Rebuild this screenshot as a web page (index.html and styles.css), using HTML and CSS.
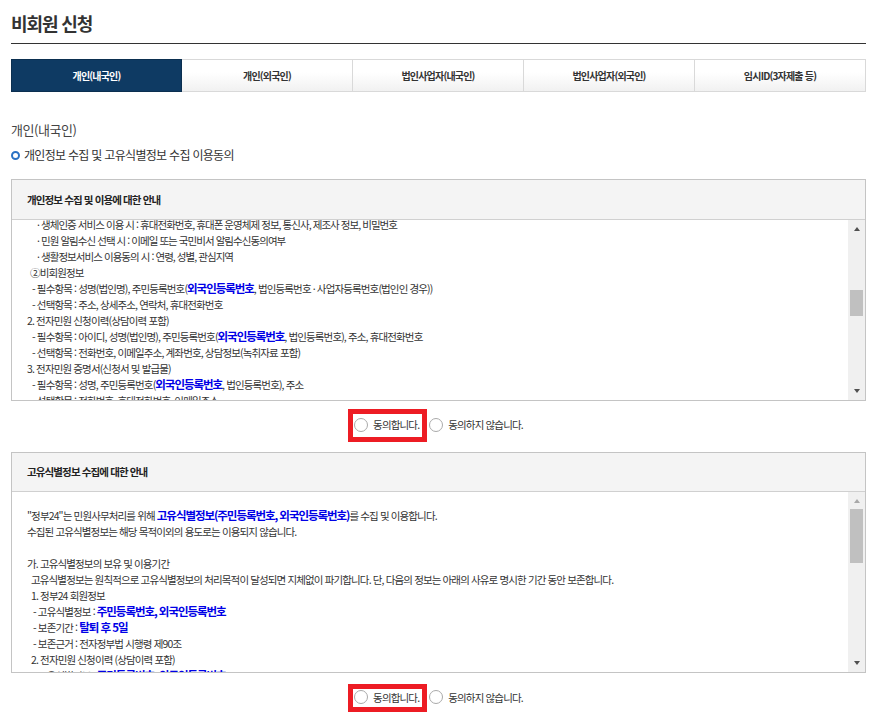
FILE: index.html
```html
<!DOCTYPE html>
<html lang="ko">
<head>
<meta charset="utf-8">
<title>비회원 신청</title>
<link rel="stylesheet" href="styles.css">
</head>
<body>
<main class="page">
  <h1 class="title">비회원 신청</h1>
  <nav class="tabs">
    <a class="tab tab-active">개인(내국인)</a>
    <a class="tab">개인(외국인)</a>
    <a class="tab">법인사업자(내국인)</a>
    <a class="tab">법인사업자(외국인)</a>
    <a class="tab">임시ID(3자제출 등)</a>
  </nav>
  <h2 class="section">개인(내국인)</h2>
  <p class="bullet"><span class="dot"></span>개인정보 수집 및 고유식별정보 수집 이용동의</p>

  <section class="box">
    <h3 class="box-head">개인정보 수집 및 이용에 대한 안내</h3>
    <div class="box-body">
      <div class="scroll-text text-a">
        <p class="l3">· 생체인증 서비스 이용 시 : 휴대전화번호, 휴대폰 운영체제 정보, 통신사, 제조사 정보, 비밀번호</p>
        <p class="l3">· 민원 알림수신 선택 시 : 이메일 또는 국민비서 알림수신동의여부</p>
        <p class="l3">· 생활정보서비스 이용동의 시 : 연령, 성별, 관심지역</p>
        <p class="l0">②비회원정보</p>
        <p class="l2">- 필수항목 : 성명(법인명), 주민등록번호(<b>외국인등록번호</b>, 법인등록번호 · 사업자등록번호(법인인 경우))</p>
        <p class="l2">- 선택항목 : 주소, 상세주소, 연락처, 휴대전화번호</p>
        <p>2. 전자민원 신청이력(상담이력 포함)</p>
        <p class="l2">- 필수항목 : 아이디, 성명(법인명), 주민등록번호(<b>외국인등록번호</b>, 법인등록번호), 주소, 휴대전화번호</p>
        <p class="l2">- 선택항목 : 전화번호, 이메일주소, 계좌번호, 상담정보(녹취자료 포함)</p>
        <p>3. 전자민원 증명서(신청서 및 발급물)</p>
        <p class="l2">- 필수항목 : 성명, 주민등록번호(<b>외국인등록번호</b>, 법인등록번호), 주소</p>
        <p class="l2">- 선택항목 : 전화번호, 휴대전화번호, 이메일주소</p>
      </div>
      <div class="scrollbar">
        <span class="arrow arrow-up"></span>
        <div class="track track-a"><span class="thumb thumb-a"></span></div>
        <span class="arrow arrow-down"></span>
      </div>
    </div>
  </section>
  <div class="agree agree-a">
    <label class="choice choice-mark choice-mark-a"><span class="radio"></span>동의합니다.</label>
    <label class="choice"><span class="radio"></span>동의하지 않습니다.</label>
  </div>

  <section class="box">
    <h3 class="box-head box-head-b">고유식별정보 수집에 대한 안내</h3>
    <div class="box-body">
      <div class="scroll-text text-b">
        <p>"정부24"는 민원사무처리를 위해 <b>고유식별정보(주민등록번호, 외국인등록번호)</b>를 수집 및 이용합니다.</p>
        <p>수집된 고유식별정보는 해당 목적이외의 용도로는 이용되지 않습니다.</p>
        <p>&nbsp;</p>
        <p>가. 고유식별정보의 보유 및 이용기간</p>
        <p class="l1">고유식별정보는 원칙적으로 고유식별정보의 처리목적이 달성되면 지체없이 파기합니다. 단, 다음의 정보는 아래의 사유로 명시한 기간 동안 보존합니다.</p>
        <p class="l1">1. 정부24 회원정보</p>
        <p class="l2b">- 고유식별정보 : <b>주민등록번호, 외국인등록번호</b></p>
        <p class="l2b">- 보존기간 : <b>탈퇴 후 5일</b></p>
        <p class="l2b">- 보존근거 : 전자정부법 시행령 제90조</p>
        <p class="l1">2. 전자민원 신청이력 (상담이력 포함)</p>
        <p class="l2b">- 고유식별정보 : <b>주민등록번호, 외국인등록번호</b></p>
      </div>
      <div class="scrollbar">
        <span class="arrow arrow-up arrow-light"></span>
        <div class="track track-b"><span class="thumb thumb-b"></span></div>
        <span class="arrow arrow-down"></span>
      </div>
    </div>
  </section>
  <div class="agree agree-b">
    <label class="choice choice-mark choice-mark-b"><span class="radio"></span>동의합니다.</label>
    <label class="choice"><span class="radio"></span>동의하지 않습니다.</label>
  </div>
</main>
</body>
</html>
```

FILE: styles.css
```css
*, *::after { box-sizing: border-box; }
html, body { margin: 0; padding: 0; background: #fff; overflow: hidden; height: 717px; }
body { font-family: "Noto Sans CJK KR", "Noto Sans", sans-serif; color: #333; }
.page { width: 855px; margin-left: 11px; }
p, h1, h2, h3 { margin: 0; }

.title {
  height: 44px;
  border-bottom: 1px solid #333;
  font-size: 18px;
  font-weight: 700;
  line-height: 47px;
  letter-spacing: -1.1px;
  color: #333;
}

.tabs { display: grid; grid-template-columns: repeat(5, 1fr); margin-top: 15px; height: 33px; }
.tab {
  display: flex;
  align-items: center;
  justify-content: center;
  border: 1px solid #d9d9d9;
  border-left-width: 0;
  background: linear-gradient(#fff 40%, #f1f1f1);
  font-size: 10px;
  font-weight: 700;
  letter-spacing: -0.8px;
  color: #333;
}
.tab-active { background: #0e3a63; border: 1px solid #0b2f50; color: #fff; }

.section {
  margin-top: 28px;
  font-size: 13px;
  font-weight: 400;
  line-height: 20px;
  letter-spacing: -0.45px;
  color: #444;
}
.bullet {
  display: flex;
  align-items: center;
  gap: 4px;
  margin-top: 5px;
  font-size: 12px;
  line-height: 20px;
  letter-spacing: -0.7px;
  color: #333;
}
.dot { width: 9px; height: 9px; border: 2.5px solid #2b72c4; border-radius: 50%; background: #fff; }

.box { border: 1px solid #c4c4c4; }
.bullet + .box { margin-top: 14px; }
.box-head {
  height: 40px;
  background: #f4f4f4;
  border-bottom: 1px solid #d0d0d0;
  padding-left: 15px;
  font-size: 10.5px;
  font-weight: 700;
  line-height: 40px;
  letter-spacing: -0.88px;
  color: #222;
}
.box-head-b { height: 39px; line-height: 38px; }
.box-body { display: flex; overflow: hidden; height: 180px; }
.scroll-text {
  flex: 1;
  min-width: 0;
  padding-left: 15px;
  font-size: 10.5px;
  line-height: 16px;
  letter-spacing: -0.87px;
  white-space: nowrap;
  color: #333;
}
.scroll-text b { color: #0000e6; font-weight: 700; font-size: 11.5px; line-height: 1; letter-spacing: -1.05px; }
.text-a { margin-top: -3px; }
.text-b { padding-top: 16px; }
.l0 { padding-left: 3px; }
.l1 { padding-left: 4px; }
.l2 { padding-left: 5px; }
.l2b { padding-left: 6px; }
.l3 { padding-left: 10px; letter-spacing: -0.95px; }

.scrollbar {
  flex: none;
  width: 17px;
  display: flex;
  flex-direction: column;
  align-items: center;
  background: #f0f0f0;
}
.arrow { flex: none; width: 0; height: 0; border-left: 3.5px solid transparent; border-right: 3.5px solid transparent; }
.arrow-up { border-bottom: 4px solid #505050; margin-top: 7px; }
.arrow-light { border-bottom-color: #a8a8a8; }
.arrow-down { border-top: 4px solid #505050; margin-bottom: 7px; }
.track { flex: 1; width: 13px; }
.thumb { display: block; background: #c0c0c0; }
.track-a { padding-top: 59px; }
.thumb-a { height: 26px; }
.track-b { padding-top: 6px; }
.thumb-b { height: 54px; }

.agree { display: flex; justify-content: center; gap: 10px; align-items: center; }
.agree-a { height: 51px; padding-bottom: 4px; }
.agree-b { height: 48px; }
.choice {
  position: relative;
  display: flex;
  align-items: center;
  gap: 5px;
  height: 16px;
  font-size: 10.5px;
  letter-spacing: -0.85px;
  color: #333;
}
.radio { width: 14px; height: 14px; border: 1px solid #aaa; border-radius: 50%; background: #fff; }
.choice-mark::after {
  content: "";
  position: absolute;
  left: -6px;
  right: -8px;
  border: 5px solid #ed1c24;
}
.choice-mark-a::after { top: -8px; height: 33px; }
.choice-mark-b::after { top: -5px; height: 28px; }
```
